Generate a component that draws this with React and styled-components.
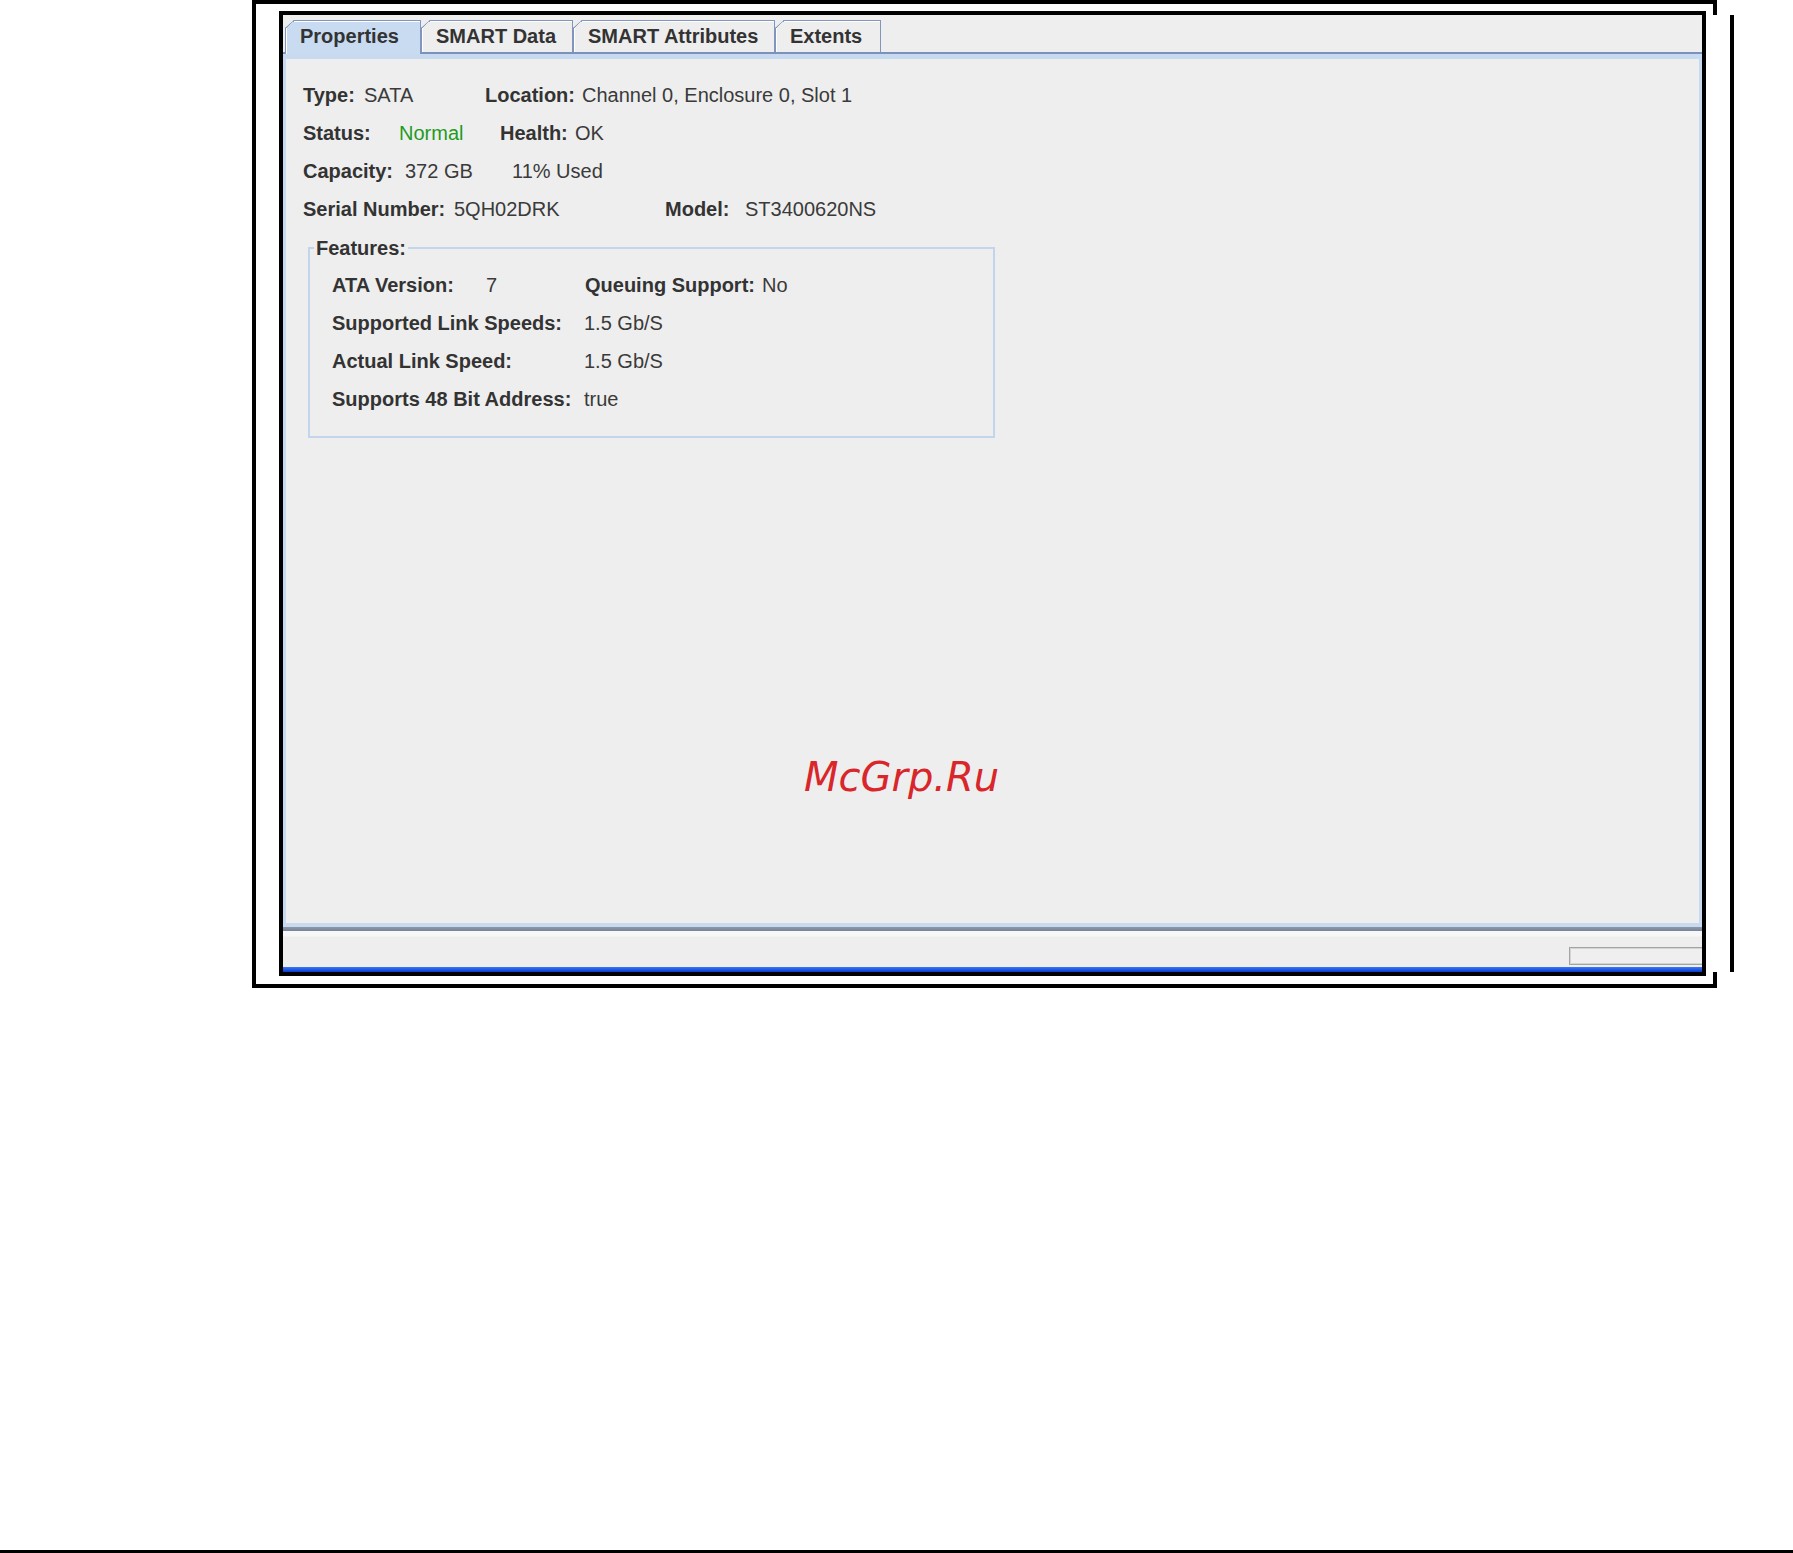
import React from "react";
import styled, { createGlobalStyle } from "styled-components";

const GlobalStyle = createGlobalStyle`
  html, body { margin: 0; padding: 0; background: #ffffff; }
  body { font-family: "Liberation Sans", Arial, sans-serif; }
`;

const Page = styled.div`
  display: flex;
  flex-direction: column;
  width: 1793px;
  height: 1553px;
  overflow: hidden;
  background: #ffffff;
`;

const TopRow = styled.div`
  display: flex;
  align-items: flex-start;
`;

const Frame = styled.div`
  position: relative;
  box-sizing: border-box;
  margin-left: 252px;
  border: 4px solid #000;
  border-right: none;
  padding: 7px 7px 8px 23px;
  &::before,
  &::after {
    content: "";
    position: absolute;
    right: -4px;
    width: 4px;
    background: #000;
  }
  &::before { top: -4px; height: 15px; }
  &::after { bottom: -4px; height: 16px; }
`;

const ScanLine = styled.div`
  flex: none;
  width: 4px;
  height: 957px;
  margin-top: 15px;
  margin-left: 17px;
  background: #000;
`;

const Window = styled.div`
  box-sizing: border-box;
  width: 1427px;
  height: 965px;
  border: 4px solid #000;
  display: flex;
  flex-direction: column;
  background: #eeeeee;
  overflow: hidden;
`;

const TabStrip = styled.div`
  flex: none;
  box-sizing: border-box;
  height: 39px;
  display: flex;
  align-items: flex-start;
  padding: 5px 0 0 2px;
  background: #eeeeee;
  border-bottom: 2px solid #7b92bd;
`;

const Tab = styled.div`
  position: relative;
  z-index: ${(p) => (p.$active ? 1 : 0)};
  box-sizing: border-box;
  flex: none;
  width: ${(p) => p.$w}px;
  height: ${(p) => (p.$active ? 34 : 32)}px;
  padding-left: 14px;
  border: 1px solid #8096bd;
  border-bottom: none;
  background: ${(p) => (p.$active ? "#c8dbf1" : "#eeeeee")};
  box-shadow: inset 1px 1px 0 #ffffff;
  clip-path: polygon(9px 0, 100% 0, 100% 100%, 0 100%, 0 8px);
  font-weight: 700;
  font-size: 20px;
  line-height: 31px;
  color: #333333;
  white-space: nowrap;
  &::before {
    content: "";
    position: absolute;
    left: -1px;
    top: -1px;
    width: 9px;
    height: 8px;
    background: linear-gradient(
      to bottom right,
      transparent calc(50% - 0.8px),
      #8096bd calc(50% - 0.8px),
      #8096bd calc(50% + 0.8px),
      transparent calc(50% + 0.8px)
    );
  }
`;

const Panel = styled.div`
  position: relative;
  flex: 1;
  min-height: 0;
  box-sizing: border-box;
  border-style: solid;
  border-color: #c8daf0;
  border-width: 5px 3px 4px 3px;
  background: #eeeeee;
  padding: 17px 0 0 17px;
`;

const Row = styled.div`
  display: flex;
  height: 38px;
  font-size: 20px;
  line-height: 38px;
  white-space: nowrap;
`;

const Label = styled.span`
  flex: none;
  width: ${(p) => (p.$w ? `${p.$w}px` : "auto")};
  font-weight: 700;
  color: #333333;
`;

const Value = styled.span`
  flex: none;
  width: ${(p) => (p.$w ? `${p.$w}px` : "auto")};
  color: ${(p) => p.$color || "#3a3a3a"};
`;

const Features = styled.fieldset`
  box-sizing: border-box;
  width: 687px;
  margin: 8px 0 0 5px;
  padding: 0 0 18px 22px;
  border: 2px solid #c3d5ea;
  min-inline-size: 0;
`;

const Legend = styled.legend`
  margin-left: -18px;
  padding: 0 2px;
  font-size: 20px;
  line-height: 24px;
  font-weight: 700;
  color: #333333;
`;

const FeatureRows = styled.div`
  margin-top: 6px;
`;

const Watermark = styled.div`
  position: absolute;
  left: 518px;
  top: 698px;
  font-family: "DejaVu Sans", Verdana, sans-serif;
  font-style: italic;
  font-size: 40px;
  line-height: 40px;
  color: #d9262b;
  white-space: nowrap;
`;

const Separator = styled.div`
  flex: none;
  height: 4px;
  background: linear-gradient(#8d98a8, #76839a);
`;

const StatusBar = styled.div`
  flex: none;
  box-sizing: border-box;
  height: 36px;
  display: flex;
  justify-content: flex-end;
  padding-top: 16px;
  background: linear-gradient(#f7f7f7 0, #f7f7f7 5px, #eeeeee 6px);
  overflow: hidden;
`;

const StatusBox = styled.div`
  flex: none;
  box-sizing: border-box;
  width: 160px;
  height: 18px;
  margin-right: -27px;
  border: 1px solid #a4a4a4;
  box-shadow: inset 1px 1px 0 #d4d4d4, inset -1px -1px 0 #d4d4d4;
  background: #efefef;
`;

const BlueBar = styled.div`
  flex: none;
  height: 5px;
  background: linear-gradient(#3a7af3, #0a38d2);
`;

const BottomRule = styled.div`
  margin-top: auto;
  height: 3px;
  background: #000;
`;

const tabs = [
  { name: "Properties", w: 136, active: true },
  { name: "SMART Data", w: 152 },
  { name: "SMART Attributes", w: 202 },
  { name: "Extents", w: 106 },
];

export default function App() {
  return (
    <>
      <GlobalStyle />
      <Page>
        <TopRow>
          <Frame>
            <Window>
              <TabStrip>
                {tabs.map((t) => (
                  <Tab key={t.name} $w={t.w} $active={t.active}>
                    {t.name}
                  </Tab>
                ))}
              </TabStrip>
              <Panel>
                <Row>
                  <Label $w={61}>Type:</Label>
                  <Value $w={121}>SATA</Value>
                  <Label $w={97}>Location:</Label>
                  <Value>Channel 0, Enclosure 0, Slot 1</Value>
                </Row>
                <Row>
                  <Label $w={96}>Status:</Label>
                  <Value $w={101} $color="#1f9b1f">Normal</Value>
                  <Label $w={75}>Health:</Label>
                  <Value>OK</Value>
                </Row>
                <Row>
                  <Label $w={102}>Capacity:</Label>
                  <Value $w={107}>372 GB</Value>
                  <Value>11% Used</Value>
                </Row>
                <Row>
                  <Label $w={151}>Serial Number:</Label>
                  <Value $w={211}>5QH02DRK</Value>
                  <Label $w={80}>Model:</Label>
                  <Value>ST3400620NS</Value>
                </Row>
                <Features>
                  <Legend>Features:</Legend>
                  <FeatureRows>
                    <Row>
                      <Label $w={154}>ATA Version:</Label>
                      <Value $w={99}>7</Value>
                      <Label $w={177}>Queuing Support:</Label>
                      <Value>No</Value>
                    </Row>
                    <Row>
                      <Label $w={252}>Supported Link Speeds:</Label>
                      <Value>1.5 Gb/S</Value>
                    </Row>
                    <Row>
                      <Label $w={252}>Actual Link Speed:</Label>
                      <Value>1.5 Gb/S</Value>
                    </Row>
                    <Row>
                      <Label $w={252}>Supports 48 Bit Address:</Label>
                      <Value>true</Value>
                    </Row>
                  </FeatureRows>
                </Features>
                <Watermark>McGrp.Ru</Watermark>
              </Panel>
              <Separator />
              <StatusBar>
                <StatusBox />
              </StatusBar>
              <BlueBar />
            </Window>
          </Frame>
          <ScanLine />
        </TopRow>
        <BottomRule />
      </Page>
    </>
  );
}
